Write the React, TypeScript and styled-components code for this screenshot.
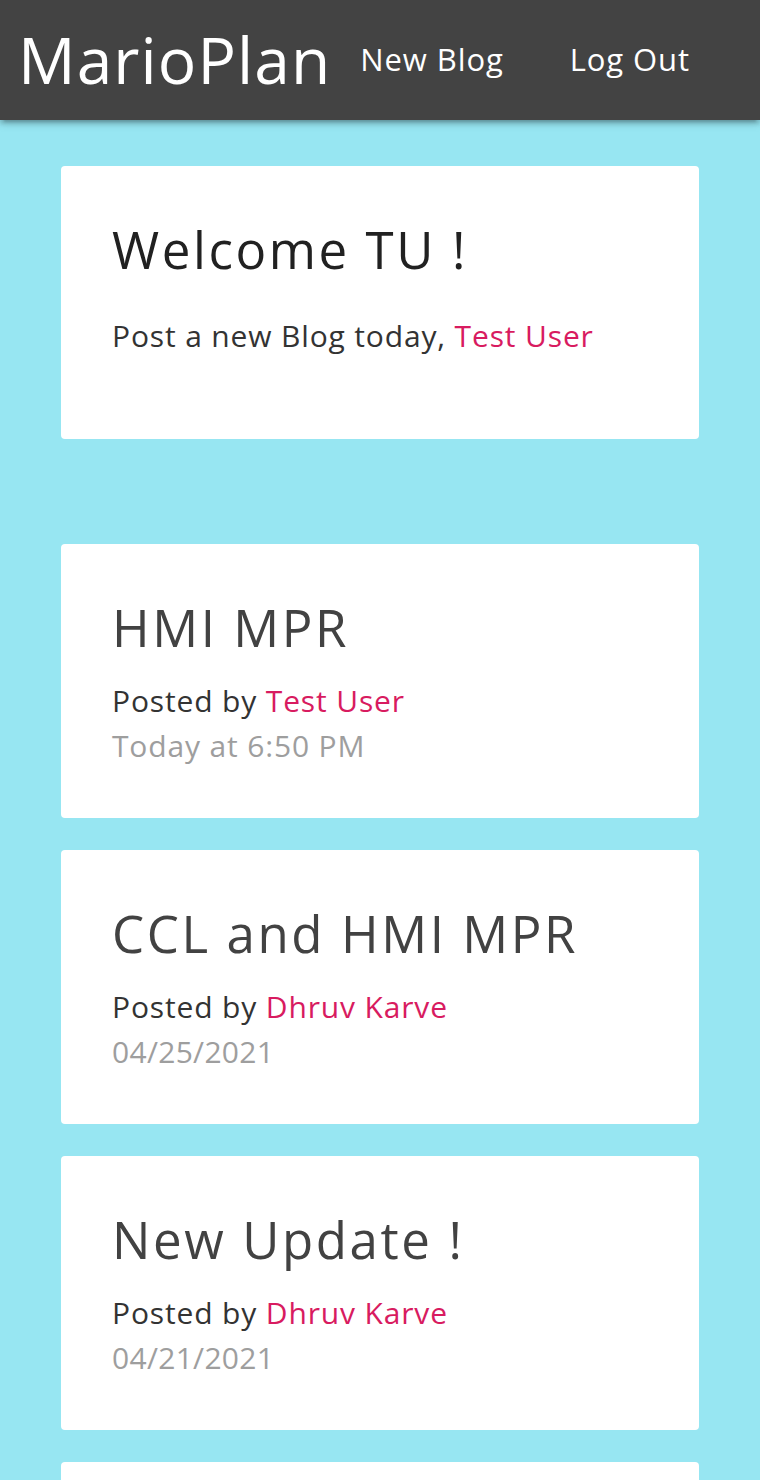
import React from 'react';
import styled, {createGlobalStyle} from 'styled-components';

const GlobalStyle = createGlobalStyle`
  html, body {
    margin: 0;
    padding: 0;
    background: #97e6f2;
    font-family: "Open Sans", "DejaVu Sans", sans-serif;
  }
  * {
    box-sizing: border-box;
  }
`;

const Nav = styled.nav`
  height: 120px;
  background: #434343;
  display: flex;
  align-items: center;
  padding: 0 0 0 18px;
  box-shadow: 0 4px 4px 0 rgba(0, 0, 0, 0.14), 0 6px 2px -4px rgba(0, 0, 0, 0.12), 0 2px 10px 0 rgba(0, 0, 0, 0.2);
  position: relative;
  z-index: 1;
  white-space: nowrap;
  overflow: hidden;
`;

const Logo = styled.a`
  flex-shrink: 0;
  color: #fff;
  font-size: 64px;
  letter-spacing: 1.1px;
  line-height: 120px;
  text-decoration: none;
`;

const Links = styled.ul`
  display: flex;
  flex-shrink: 0;
  gap: 66px;
  margin: 0 0 0 29px;
  padding: 0;
  list-style: none;
`;

const NavLink = styled.a`
  display: block;
  color: #fff;
  font-size: 31px;
  letter-spacing: 0.9px;
  line-height: 120px;
  text-decoration: none;
  position: relative;
  top: -1px;
`;

const Main = styled.main`
  padding: 46px 61px 0;
`;

const Card = styled.div<{$bottom?: number}>`
  background: #fff;
  border-radius: 4px;
  padding: 51px 51px ${(p) => p.$bottom ?? 50}px;
`;

const WelcomeCard = styled(Card)`
  margin-bottom: 105px;
`;

const Title = styled.h2<{$dark?: boolean}>`
  margin: 0;
  font-size: 51px;
  font-weight: 400;
  letter-spacing: 2.6px;
  line-height: 64px;
  color: ${(p) => (p.$dark ? '#212121' : '#424242')};
`;

const Line = styled.p<{$gap?: number; $muted?: boolean}>`
  margin: ${(p) => p.$gap ?? 0}px 0 0;
  font-size: 30px;
  letter-spacing: 0.85px;
  line-height: 45px;
  color: ${(p) => (p.$muted ? '#9e9e9e' : '#333')};
`;

const DateLine = styled(Line)`
  letter-spacing: 0.3px;
`;

const Name = styled.span`
  color: #d81b60;
`;

const ProjectList = styled.div`
  display: flex;
  flex-direction: column;
  gap: 32px;
`;

const projects = [
  {title: 'HMI MPR', author: 'Test User', date: 'Today at 6:50 PM'},
  {title: 'CCL and HMI MPR', author: 'Dhruv Karve', date: '04/25/2021'},
  {title: 'New Update !', author: 'Dhruv Karve', date: '04/21/2021'},
  {title: 'Project Update', author: 'Dhruv Karve', date: '04/20/2021'},
];

export default function App() {
  return (
    <>
      <GlobalStyle/>
      <Nav>
        <Logo href="#">MarioPlan</Logo>
        <Links>
          <li><NavLink href="#">New Blog</NavLink></li>
          <li><NavLink href="#">Log Out</NavLink></li>
        </Links>
      </Nav>
      <Main>
        <WelcomeCard $bottom={81}>
          <Title $dark>Welcome TU !</Title>
          <Line $gap={32}>Post a new Blog today, <Name>Test User</Name></Line>
        </WelcomeCard>
        <ProjectList>
          {projects.map((p) => (
            <Card key={p.title}>
              <Title>{p.title}</Title>
              <Line $gap={19}>Posted by <Name>{p.author}</Name></Line>
              {p.date.includes('/')
                ? <DateLine $muted>{p.date}</DateLine>
                : <Line $muted>{p.date}</Line>}
            </Card>
          ))}
        </ProjectList>
      </Main>
    </>
  );
}
